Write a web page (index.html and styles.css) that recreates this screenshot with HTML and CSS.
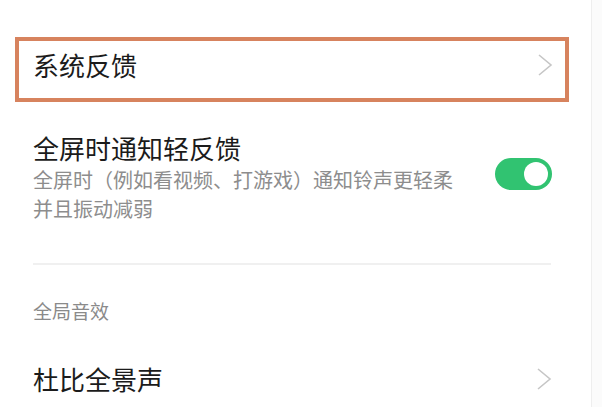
FILE: index.html
```html
<!DOCTYPE html>
<html lang="zh-CN">
<head>
  <meta charset="UTF-8" />
  <title>声音与振动</title>
  <link rel="stylesheet" href="styles.css">
</head>
<body>
  <div class="page">
    <div class="highlight">
      <div class="row row-link">
        <span class="title">系统反馈</span>
        <svg class="chevron" width="16" height="24" viewBox="0 0 16 24"><polyline points="2,2 14,12 2,22" /></svg>
      </div>
    </div>

    <div class="row row-switch">
      <div class="text">
        <div class="title">全屏时通知轻反馈</div>
        <div class="desc">全屏时（例如看视频、打游戏）通知铃声更轻柔<br>并且振动减弱</div>
      </div>
      <div class="toggle on"><span class="knob"></span></div>
    </div>

    <div class="divider"></div>

    <div class="section">全局音效</div>

    <div class="row row-link plain">
      <span class="title">杜比全景声</span>
      <svg class="chevron" width="16" height="24" viewBox="0 0 16 24"><polyline points="2,2 14,12 2,22" /></svg>
    </div>
  </div>
</body>
</html>
```

FILE: styles.css
```css
html, body { margin: 0; background: #fbfbfb; }
body { font-family: "Noto Sans CJK SC", "Noto Sans", sans-serif; color: #1b1b1b; }
.page { width: 592px; height: 407px; background: #fff; border-right: 1px solid #eeeeee; box-sizing: border-box; overflow: hidden; padding-top: 37px; }

.highlight { margin: 0 22px 0 15px; border: 4px solid #d7835e; padding: 0 12px 9px 14px; }
.row { display: flex; align-items: center; justify-content: space-between; }
.row-link { height: 48px; }
.title { font-size: 26px; line-height: 34px; }

.chevron { display: block; }
.chevron polyline { fill: none; stroke: #c6c6c6; stroke-width: 1.6; }

.row-switch { margin: 29px 39px 0 33px; }
.desc { font-size: 20px; line-height: 29px; color: #8d8d8d; }
.toggle { width: 57px; height: 32px; border-radius: 16px; background: #31c371; position: relative; margin-bottom: 7px; }
.toggle .knob { position: absolute; right: 4px; top: 4px; width: 24px; height: 24px; border-radius: 50%; background: #fff; }

.divider { height: 2px; background: #f0f0f0; margin: 40px 40px 0 33px; }

.section { font-size: 19px; line-height: 28px; color: #8a8a8a; margin: 32px 0 0 33px; }

.plain { margin: 37px 39px 0 33px; height: 34px; }
```
